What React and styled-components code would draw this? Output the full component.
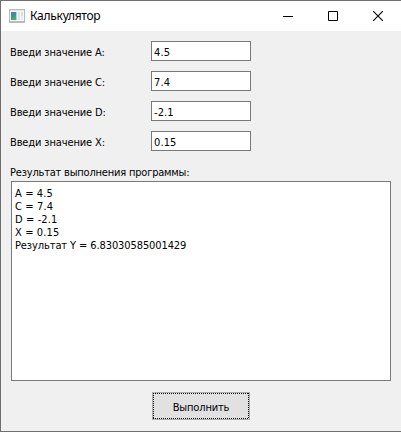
import React from "react";
import styled, { createGlobalStyle } from "styled-components";

const GlobalStyle = createGlobalStyle`
  * { box-sizing: border-box; }
  html, body { margin: 0; padding: 0; overflow: hidden; }
`;

const Window = styled.main`
  display: flex;
  flex-direction: column;
  width: 401px;
  height: 432px;
  border: 1px solid #6f6f6f;
  border-right: 0;
  background: #f0f0f0;
  color: #000;
  font: 11px/13px "DejaVu Sans Condensed", "DejaVu Sans", sans-serif;
  font-stretch: condensed;
`;

const TitleBar = styled.header`
  display: flex;
  align-items: center;
  height: 30px;
  flex: none;
  padding-left: 8px;
  background: #fff;
`;

const Title = styled.h1`
  flex: 1;
  margin: 0 0 0 5px;
  font: 12px/16px "Noto Sans", "Open Sans", sans-serif;
  letter-spacing: ${(p) => p.$tracking}px;
`;

const WindowButton = styled.button`
  display: flex;
  align-items: center;
  justify-content: center;
  width: ${(p) => p.$width || 45}px;
  height: 30px;
  padding: 0;
  border: 0;
  background: transparent;
`;

const Text = styled.span`
  white-space: pre;
  letter-spacing: ${(p) => p.$tracking || 0}px;
`;

const Form = styled.section`
  display: grid;
  grid-template-columns: 141px 100px;
  row-gap: 10px;
  padding: 10px 0 0 9px;
`;

const Label = styled.label`
  display: flex;
  align-items: center;
  height: 20px;
  padding-top: 3px;
`;

const Field = styled.input`
  width: 100px;
  height: 20px;
  padding: 2px 2px 0;
  border: 1px solid #7a7a7a;
  border-radius: 0;
  outline: 0;
  background: #fff;
  color: #000;
  font: inherit;
  letter-spacing: ${(p) => p.$tracking || 0}px;
`;

const ResultLabel = styled.div`
  height: 15px;
  margin: 15px 0 0 9px;
`;

const Output = styled.output`
  display: flex;
  flex-direction: column;
  width: 380px;
  height: 200px;
  margin-left: 10px;
  padding: 5px 3px;
  border: 1px solid #7a7a7a;
  background: #fff;
`;

const RunButton = styled.button`
  width: 98px;
  height: 28px;
  margin: 11px 0 0 151px;
  padding: 3px 0 0;
  border: 1px solid #adadad;
  background: #e1e1e1;
  color: #000;
  font: inherit;
  display: grid;
  place-items: center;
  background-image:
    repeating-linear-gradient(90deg, #000 0 1px, transparent 1px 2px),
    repeating-linear-gradient(90deg, #000 0 1px, transparent 1px 2px),
    repeating-linear-gradient(#000 0 1px, transparent 1px 2px),
    repeating-linear-gradient(#000 0 1px, transparent 1px 2px);
  background-size: 100% 1px, 100% 1px, 1px 100%, 1px 100%;
  background-position: top, bottom, left, right;
  background-repeat: no-repeat;
`;

const fields = [
  ["A", "4.5"],
  ["C", "7.4"],
  ["D", "-2.1"],
  ["X", "0.15"],
];

function AppIcon() {
  return (
    <svg width="16" height="14" viewBox="0 0 16 14" shapeRendering="crispEdges">
      <defs>
        <linearGradient id="pane" x1="0" y1="0" x2="0.5" y2="1">
          <stop offset="0" stopColor="#487fae" />
          <stop offset="0.5" stopColor="#438f93" />
          <stop offset="1" stopColor="#57a66c" />
        </linearGradient>
      </defs>
      <path fill="#b6babd" d="M0 0h16v14H0z" />
      <path fill="#e4e7e9" d="M1 1h14v1H1z" />
      <path fill="#f6f7f8" d="M1 2h14v10H1z" />
      <path fill="url(#pane)" d="M2 3h5v8H2z" />
      <path fill="#b4cfd0" d="M7 3h1v8H7z" />
      <path fill="#dce5ea" d="M9 3h2v8H9z" />
      <path fill="#cfe0df" d="M12 3h2v4h-2z" />
      <path fill="#e6eced" d="M12 7h2v4h-2z" />
    </svg>
  );
}

export default function App() {
  return (
    <>
      <GlobalStyle />
      <Window>
        <TitleBar>
          <AppIcon />
          <Title $tracking={-0.27}>Калькулятор</Title>
          <WindowButton aria-label="Свернуть">
            <svg width="10" height="10" shapeRendering="crispEdges">
              <path d="M0 5h10v1H0z" />
            </svg>
          </WindowButton>
          <WindowButton aria-label="Развернуть">
            <svg width="10" height="10">
              <path d="M.5.5h9v9h-9z" fill="none" stroke="#000" />
            </svg>
          </WindowButton>
          <WindowButton $width={46} aria-label="Закрыть">
            <svg width="10" height="10">
              <path d="M0 0l10 10M10 0L0 10" stroke="#000" strokeWidth="1.1" />
            </svg>
          </WindowButton>
        </TitleBar>
        <Form>
          {fields.map(([name, value]) => (
            <React.Fragment key={name}>
              <Label htmlFor={name}>
                <Text $tracking={-0.13}>{`Введи значение ${name}:`}</Text>
              </Label>
              <Field id={name} defaultValue={value} $tracking={0.1} />
            </React.Fragment>
          ))}
        </Form>
        <ResultLabel>
          <Text $tracking={-0.2}>Результат выполнения программы:</Text>
        </ResultLabel>
        <Output>
          {fields.map(([name, value]) => (
            <Text key={name} $tracking={0.12}>{`${name} = ${value}`}</Text>
          ))}
          <Text $tracking={-0.1}>Результат Y = 6.83030585001429</Text>
        </Output>
        <RunButton>
          <Text $tracking={-0.15}>Выполнить</Text>
        </RunButton>
      </Window>
    </>
  );
}
